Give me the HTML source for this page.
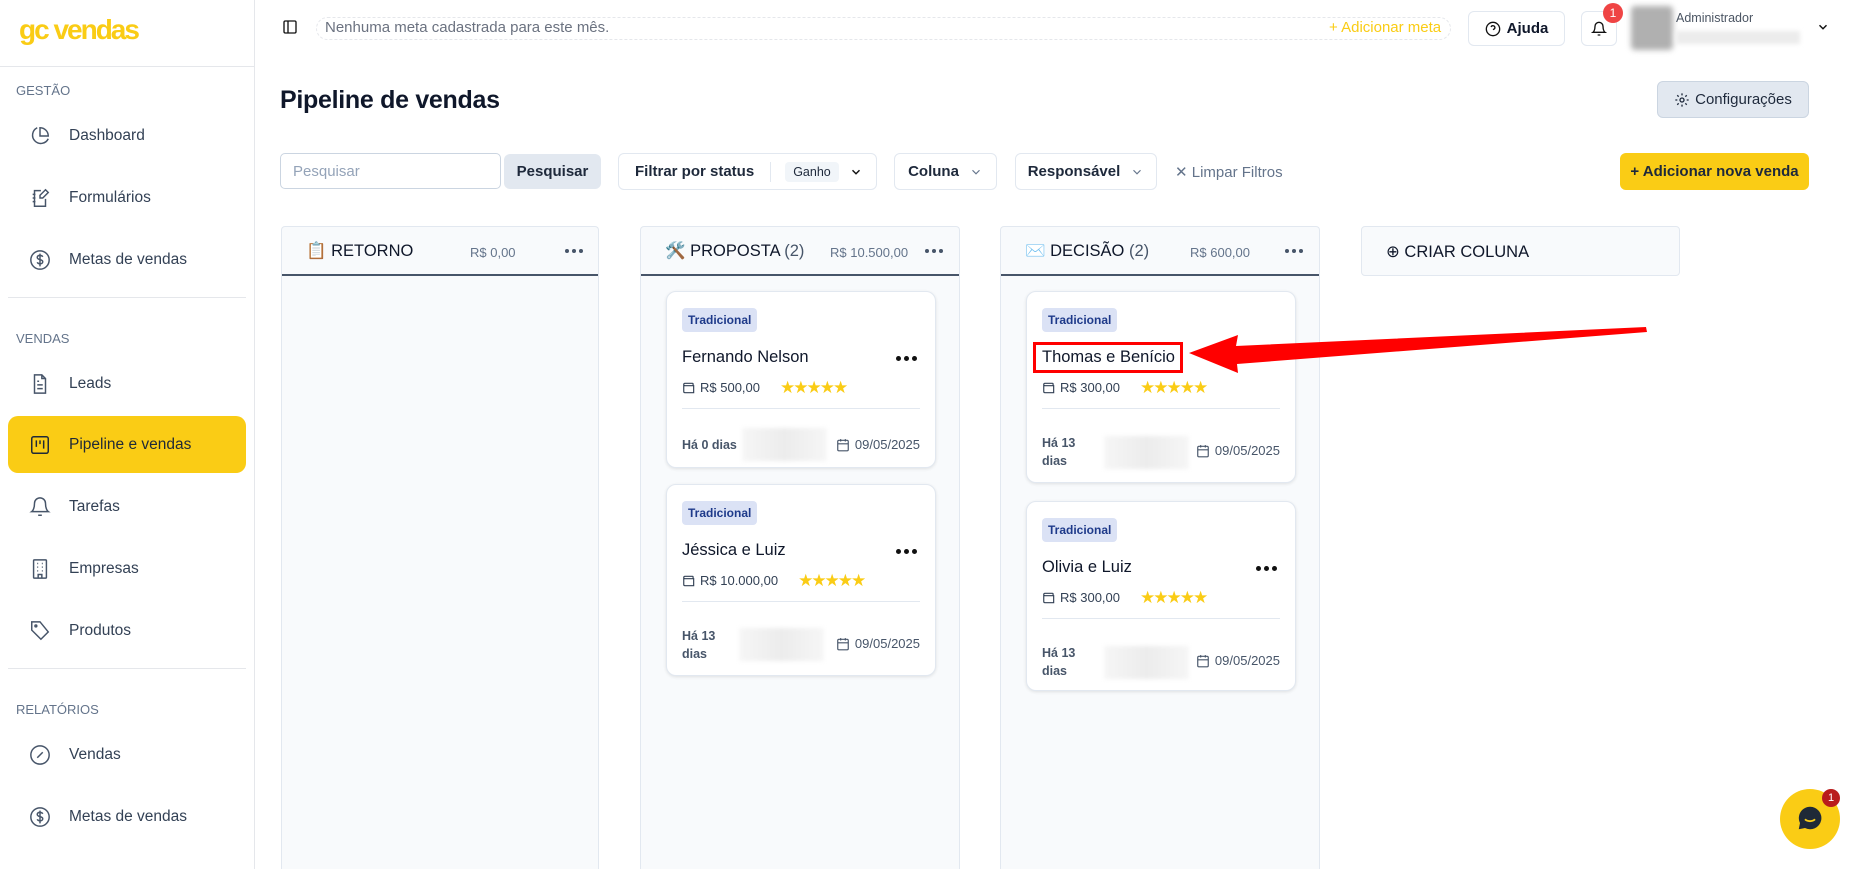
<!DOCTYPE html>
<html style="width:1865px;height:869px;overflow:hidden"><head><meta charset="utf-8"><style>
*{box-sizing:border-box;margin:0;padding:0}
body{width:1865px;height:869px;overflow:hidden;background:#fff;font-family:"Liberation Sans",Arial,sans-serif;color:#0f172a;position:relative}
.abs{position:absolute}
.side{position:absolute;left:0;top:0;width:255px;height:869px;border-right:1px solid #e5e7eb;background:#fff}
.logo{position:absolute;left:19px;top:14px;font-size:28px;font-weight:bold;color:#FACC15;letter-spacing:-2px}
.sec{position:absolute;left:16px;font-size:13px;color:#64748b}
.nav{position:absolute;left:8px;width:238px;height:57px;display:flex;align-items:center;font-size:15.5px;color:#334155;border-radius:10px}
.nav svg{position:absolute;left:21px}
.nav span{position:absolute;left:61px}
.nav.act{background:#FACC15;color:#1f2937}
.hr{position:absolute;left:8px;width:238px;height:1px;background:#e5e7eb}
.btn{position:absolute;border:1px solid #e2e8f0;border-radius:6px;background:#fff;font-size:15px;display:flex;align-items:center;justify-content:center}
.col{position:absolute;top:226px;height:643px;background:#f8fafc;border:1px solid #e2e8f0;border-bottom:none;border-radius:4px 4px 0 0}
.ch{height:49px;border-bottom:2px solid #475569;position:relative;font-size:16.5px}
.ch .t{position:absolute;left:24px;top:15px}
.ch .a{position:absolute;top:18px;font-size:13px;color:#64748b}
.dd{position:absolute;top:22px;display:flex;gap:3px}
.dd i{width:4px;height:4px;border-radius:50%;background:#475569;display:block}
.card{position:absolute;background:#fff;border:1px solid #e2e8f0;border-radius:10px;box-shadow:0 1px 3px rgba(0,0,0,.1);width:270px}
.tag{position:absolute;left:15px;top:16px;background:#dbe2f5;color:#1e3a8a;font-size:12px;font-weight:bold;padding:5px 6px;border-radius:4px}
.nm{position:absolute;left:15px;top:56px;font-size:16.5px}
.cd{position:absolute;right:18px;top:64px;display:flex;gap:3px}
.cd i{width:5px;height:5px;border-radius:50%;background:#111;display:block}
.pr{position:absolute;left:15px;top:88px;font-size:13px;color:#334155;display:flex;align-items:center;gap:4px}
.st{color:#FACC15;font-size:17px;letter-spacing:-2px;margin-left:16px;font-family:"DejaVu Sans",sans-serif;line-height:14px}
.dv{position:absolute;left:15px;right:15px;top:116px;height:1px;background:#e2e8f0}
.ft{position:absolute;left:15px;font-size:12.5px;font-weight:bold;color:#475569;line-height:18px}
.bl{position:absolute;width:85px;height:33px;background:linear-gradient(90deg,#f6f6f6,#ececec,#f6f6f6);filter:blur(2px)}
.dt{position:absolute;right:15px;font-size:13px;color:#475569;display:flex;align-items:center;gap:5px}
</style></head><body>
<svg width="0" height="0" style="position:absolute"><defs>
<symbol id="wal" viewBox="0 0 24 24"><path d="M19 7V5a1 1 0 0 0-1-1H5a2 2 0 0 0 0 4h15v12H5a2 2 0 0 1-2-2V6" fill="none" stroke="#334155" stroke-width="2"/><path d="M16 14h.01" stroke="#334155" stroke-width="3"/></symbol>
<symbol id="cal" viewBox="0 0 24 24"><rect x="3" y="4" width="18" height="18" rx="2" fill="none" stroke="#475569" stroke-width="2"/><path d="M16 2v4M8 2v4M3 10h18" fill="none" stroke="#475569" stroke-width="2"/></symbol>
</defs></svg>
<div class="side">
<div class="logo">gc vendas</div>
<div class="abs" style="left:0;top:66px;width:255px;height:1px;background:#e5e7eb"></div>
<div class="sec" style="top:83px">GESTÃO</div>
<div class="nav" style="top:107px"><svg width="22" height="22" viewBox="0 0 24 24" fill="none" stroke="#475569" stroke-width="1.6"><path d="M21 15A9 9 0 1 1 9 3"/><path d="M12 3a9 9 0 0 1 9 9h-9z"/></svg><span>Dashboard</span></div>
<div class="nav" style="top:169px"><svg width="22" height="22" viewBox="0 0 24 24" fill="none" stroke="#475569" stroke-width="1.6"><path d="M13 4H6v17h12v-8"/><path d="M4 8h3M4 12h3M4 16h3"/><path d="M18 3l3 3-6 6h-3v-3z"/></svg><span>Formulários</span></div>
<div class="nav" style="top:231px"><svg width="22" height="22" viewBox="0 0 24 24" fill="none" stroke="#475569" stroke-width="1.6"><circle cx="12" cy="12" r="10"/><path d="M15 8.5c-.5-1-1.6-1.5-3-1.5-1.8 0-3 .9-3 2.3 0 3 6 1.6 6 4.6 0 1.4-1.3 2.3-3 2.3-1.5 0-2.6-.6-3-1.7M12 5v14"/></svg><span>Metas de vendas</span></div>
<div class="hr" style="top:297px"></div>
<div class="sec" style="top:331px">VENDAS</div>
<div class="nav" style="top:355px"><svg width="22" height="22" viewBox="0 0 24 24" fill="none" stroke="#475569" stroke-width="1.6"><path d="M14 2H6v20h12V6z"/><path d="M14 2v4h4M9 13h6M9 17h6M9 9h2"/></svg><span>Leads</span></div>
<div class="nav act" style="top:416px"><svg width="22" height="22" viewBox="0 0 24 24" fill="none" stroke="#1f2937" stroke-width="1.6"><rect x="3" y="3" width="18" height="18" rx="2"/><path d="M8 7v7M12 7v4M16 7v9"/></svg><span>Pipeline e vendas</span></div>
<div class="nav" style="top:478px"><svg width="22" height="22" viewBox="0 0 24 24" fill="none" stroke="#475569" stroke-width="1.6"><path d="M6 8a6 6 0 0 1 12 0c0 7 3 9 3 9H3s3-2 3-9M10 21h4"/></svg><span>Tarefas</span></div>
<div class="nav" style="top:540px"><svg width="22" height="22" viewBox="0 0 24 24" fill="none" stroke="#475569" stroke-width="1.6"><rect x="5" y="2" width="14" height="20" rx="1"/><path d="M9 6h1M14 6h1M9 10h1M14 10h1M9 14h1M14 14h1M10 22v-4h4v4"/></svg><span>Empresas</span></div>
<div class="nav" style="top:602px"><svg width="22" height="22" viewBox="0 0 24 24" fill="none" stroke="#475569" stroke-width="1.6"><path d="M12 2H3v9l10 10 8-8z"/><circle cx="7.5" cy="6.5" r="1"/></svg><span>Produtos</span></div>
<div class="hr" style="top:668px"></div>
<div class="sec" style="top:702px">RELATÓRIOS</div>
<div class="nav" style="top:726px"><svg width="22" height="22" viewBox="0 0 24 24" fill="none" stroke="#475569" stroke-width="1.6"><circle cx="12" cy="12" r="10"/><path d="M9 15l6-6"/></svg><span>Vendas</span></div>
<div class="nav" style="top:788px"><svg width="22" height="22" viewBox="0 0 24 24" fill="none" stroke="#475569" stroke-width="1.6"><circle cx="12" cy="12" r="10"/><path d="M15 8.5c-.5-1-1.6-1.5-3-1.5-1.8 0-3 .9-3 2.3 0 3 6 1.6 6 4.6 0 1.4-1.3 2.3-3 2.3-1.5 0-2.6-.6-3-1.7M12 5v14"/></svg><span>Metas de vendas</span></div>
</div>

<svg class="abs" style="left:282px;top:19px" width="16" height="16" viewBox="0 0 24 24" fill="none" stroke="#111" stroke-width="2"><rect x="3" y="3" width="18" height="18" rx="2"/><path d="M9 3v18"/></svg>
<div class="abs" style="left:316px;top:17px;width:1135px;height:23px;border:1px dashed #e5e7eb;border-radius:12px"></div>
<div class="abs" style="left:325px;top:19px;font-size:15px;color:#6b7280">Nenhuma meta cadastrada para este mês.</div>
<div class="abs" style="left:1329px;top:19px;font-size:15px;color:#FACC15">+ Adicionar meta</div>
<div class="btn" style="left:1468px;top:11px;width:97px;height:35px;font-weight:bold;gap:6px"><svg width="16" height="16" viewBox="0 0 24 24" fill="none" stroke="#111" stroke-width="2"><circle cx="12" cy="12" r="10"/><path d="M9.1 9a3 3 0 0 1 5.8 1c0 2-3 3-3 3M12 17h.01"/></svg>Ajuda</div>
<div class="btn" style="left:1581px;top:11px;width:36px;height:35px"><svg width="16" height="16" viewBox="0 0 24 24" fill="none" stroke="#111" stroke-width="2"><path d="M6 8a6 6 0 0 1 12 0c0 7 3 9 3 9H3s3-2 3-9M10 21h4"/></svg></div>
<div class="abs" style="left:1603px;top:3px;width:20px;height:20px;border-radius:50%;background:#ef4444;color:#fff;font-size:12px;text-align:center;line-height:20px">1</div>
<div class="abs" style="left:1631px;top:6px;width:42px;height:44px;background:#b0b0b0;filter:blur(3px);border-radius:4px"></div>
<div class="abs" style="left:1676px;top:11px;font-size:12.5px;color:#4b5563">Administrador</div>
<div class="abs" style="left:1676px;top:31px;width:124px;height:13px;background:#ececec;filter:blur(2px)"></div>
<svg class="abs" style="left:1816px;top:20px" width="14" height="14" viewBox="0 0 24 24" fill="none" stroke="#111" stroke-width="2.5"><path d="M6 9l6 6 6-6"/></svg>

<div class="abs" style="left:280px;top:86px;font-size:25px;font-weight:bold;color:#0f172a;letter-spacing:-0.3px">Pipeline de vendas</div>
<div class="btn" style="left:1657px;top:81px;width:152px;height:37px;background:#e2e8f0;border-color:#cbd5e1;color:#1e293b;gap:5px"><svg width="16" height="16" viewBox="0 0 24 24" fill="none" stroke="#1e293b" stroke-width="2"><circle cx="12" cy="12" r="3"/><path d="M12 2v3M12 19v3M2 12h3M19 12h3M4.9 4.9l2.1 2.1M17 17l2.1 2.1M4.9 19.1L7 17M17 7l2.1-2.1"/></svg>Configurações</div>

<div class="abs" style="left:280px;top:153px;width:221px;height:36px;border:1px solid #cbd5e1;border-radius:5px;font-size:15px;color:#94a3b8;padding:9px 12px">Pesquisar</div>
<div class="btn" style="left:504px;top:154px;width:97px;height:35px;background:#e2e8f0;border:none;font-weight:bold;color:#1e293b">Pesquisar</div>
<div class="btn" style="left:618px;top:153px;width:259px;height:37px;justify-content:flex-start;padding-left:16px;font-weight:bold;color:#1e293b">Filtrar por status<span style="width:1px;height:20px;background:#e2e8f0;margin-left:16px"></span><span style="margin-left:14px;background:#f1f5f9;font-size:12.5px;font-weight:normal;padding:3px 8px;border-radius:4px">Ganho</span><svg style="margin-left:10px" width="14" height="14" viewBox="0 0 24 24" fill="none" stroke="#111" stroke-width="2.5"><path d="M6 9l6 6 6-6"/></svg></div>
<div class="btn" style="left:894px;top:153px;width:103px;height:37px;font-weight:bold;color:#1e293b;gap:10px">Coluna<svg width="14" height="14" viewBox="0 0 24 24" fill="none" stroke="#64748b" stroke-width="2"><path d="M6 9l6 6 6-6"/></svg></div>
<div class="btn" style="left:1015px;top:153px;width:142px;height:37px;font-weight:bold;color:#1e293b;gap:10px">Responsável<svg width="14" height="14" viewBox="0 0 24 24" fill="none" stroke="#64748b" stroke-width="2"><path d="M6 9l6 6 6-6"/></svg></div>
<div class="abs" style="left:1175px;top:163px;font-size:15px;color:#64748b">✕ Limpar Filtros</div>
<div class="btn" style="left:1620px;top:153px;width:189px;height:37px;background:#FACC15;border:none;color:#1e293b;font-weight:bold">+ Adicionar nova venda</div>

<div class="col" style="left:281px;width:318px"><div class="ch"><span class="t">📋 RETORNO</span><span class="a" style="left:188px">R$ 0,00</span><span class="dd" style="left:283px"><i></i><i></i><i></i></span></div></div>
<div class="col" style="left:640px;width:320px"><div class="ch"><span class="t">🛠️ PROPOSTA <span style="color:#475569">(2)</span></span><span class="a" style="left:189px">R$ 10.500,00</span><span class="dd" style="left:284px"><i></i><i></i><i></i></span></div>
<div class="card" style="left:25px;top:64px;height:177px"><div class="tag">Tradicional</div><div class="nm">Fernando Nelson</div><div class="cd"><i></i><i></i><i></i></div><div class="pr"><svg width="14" height="14"><use href="#wal"/></svg>R$ 500,00<span class="st">★★★★★</span></div><div class="dv"></div><div class="ft" style="top:144px">Há 0 dias</div><div class="bl" style="left:75px;top:136px"></div><div class="dt" style="top:145px"><svg width="14" height="14"><use href="#cal"/></svg>09/05/2025</div></div>
<div class="card" style="left:25px;top:257px;height:192px"><div class="tag">Tradicional</div><div class="nm">Jéssica e Luiz</div><div class="cd"><i></i><i></i><i></i></div><div class="pr"><svg width="14" height="14"><use href="#wal"/></svg>R$ 10.000,00<span class="st">★★★★★</span></div><div class="dv"></div><div class="ft" style="top:142px">Há 13<br>dias</div><div class="bl" style="left:72px;top:143px"></div><div class="dt" style="top:151px"><svg width="14" height="14"><use href="#cal"/></svg>09/05/2025</div></div>
</div>
<div class="col" style="left:1000px;width:320px"><div class="ch"><span class="t">✉️ DECISÃO <span style="color:#475569">(2)</span></span><span class="a" style="left:189px">R$ 600,00</span><span class="dd" style="left:284px"><i></i><i></i><i></i></span></div>
<div class="card" style="left:25px;top:64px;height:192px"><div class="tag">Tradicional</div><div class="nm">Thomas e Benício</div><div class="pr"><svg width="14" height="14"><use href="#wal"/></svg>R$ 300,00<span class="st">★★★★★</span></div><div class="dv"></div><div class="ft" style="top:142px">Há 13<br>dias</div><div class="bl" style="left:77px;top:144px"></div><div class="dt" style="top:151px"><svg width="14" height="14"><use href="#cal"/></svg>09/05/2025</div></div>
<div class="card" style="left:25px;top:274px;height:190px"><div class="tag">Tradicional</div><div class="nm">Olivia e Luiz</div><div class="cd"><i></i><i></i><i></i></div><div class="pr"><svg width="14" height="14"><use href="#wal"/></svg>R$ 300,00<span class="st">★★★★★</span></div><div class="dv"></div><div class="ft" style="top:142px">Há 13<br>dias</div><div class="bl" style="left:77px;top:144px"></div><div class="dt" style="top:151px"><svg width="14" height="14"><use href="#cal"/></svg>09/05/2025</div></div>
</div>
<div class="abs" style="left:1361px;top:226px;width:319px;height:50px;background:#f8fafc;border:1px solid #e2e8f0;border-radius:4px;font-size:16.5px;padding:15px 24px">⊕ CRIAR COLUNA</div>

<div class="abs" style="left:1033px;top:342px;width:150px;height:31px;border:3px solid #ff0000"></div>
<svg class="abs" style="left:0;top:0" width="1865" height="869"><polygon points="1189,353 1238,335 1236,346 1646,327 1647,332 1237,364 1238,373" fill="#ff0000"/></svg>

<div class="abs" style="left:1780px;top:789px;width:60px;height:60px;border-radius:50%;background:#FACC15"></div>
<svg class="abs" style="left:1795px;top:803px" width="30" height="30" viewBox="0 0 24 24"><path d="M12 3a9 9 0 0 0-8 13l-1 5 5-1a9 9 0 1 0 4-17z" fill="#1f2937"/><path d="M8 13c2 2 6 2 8 0" stroke="#FACC15" stroke-width="1.5" fill="none"/></svg>
<div class="abs" style="left:1822px;top:789px;width:18px;height:18px;border-radius:50%;background:#b91c1c;color:#fff;font-size:11px;text-align:center;line-height:18px">1</div>
</body></html>
